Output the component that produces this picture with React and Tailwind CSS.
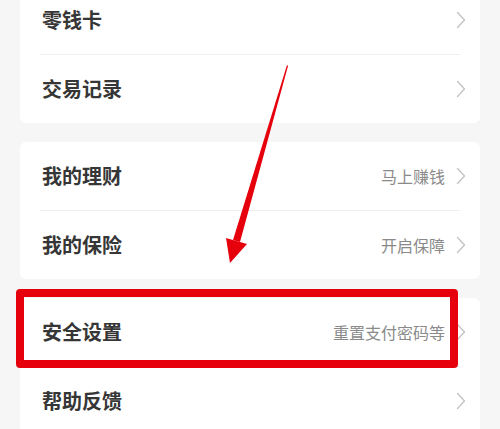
const groups = [
  [
    { title: '零钱卡' },
    { title: '交易记录' },
  ],
  [
    { title: '我的理财', hint: '马上赚钱' },
    { title: '我的保险', hint: '开启保障' },
  ],
  [
    { title: '安全设置', hint: '重置支付密码等' },
    { title: '帮助反馈' },
  ],
];

const Chevron = () => (
  <svg width="10" height="18" viewBox="0 0 10 18" fill="none" className="shrink-0">
    <path d="M1.5 1.5L8.5 9L1.5 16.5" stroke="#c4c4c4" strokeWidth="1.4" strokeLinecap="round" strokeLinejoin="round" />
  </svg>
);

const Row = ({ title, hint }) => (
  <div className="h-[68px] flex items-center justify-between pl-[22px] pr-[14px]">
    <span className="text-[20px] font-semibold text-[#363636]">{title}</span>
    <div className="flex items-center gap-[11px]">
      {hint && <span className="text-[16px] text-[#8a8a8a]">{hint}</span>}
      <Chevron />
    </div>
  </div>
);

export default function App() {
  return (
    <div
      className="relative w-[500px] h-[429px] overflow-hidden bg-[#f6f6f6]"
      style={{ fontFamily: '"Noto Sans CJK SC", "Noto Sans", sans-serif' }}
    >
      <div className="flex flex-col gap-[19px] px-[20px] -mt-[14px]">
        {groups.map((rows, i) => (
          <div key={i} className="bg-white rounded-[6px]">
            {rows.map((r, j) => (
              <div key={r.title}>
                {j > 0 && <div className="h-px bg-[#efefef] mx-[20px]" />}
                <Row {...r} />
              </div>
            ))}
          </div>
        ))}
      </div>

      {/* annotation: red highlight box */}
      <div className="absolute left-[16px] top-[289px] w-[442px] h-[79px] border-[8px] border-[#e5000c] rounded-[4px]" />

      {/* annotation: red arrow */}
      <svg className="absolute left-0 top-0" width="500" height="429" viewBox="0 0 500 429">
        <polygon points="287,65 288,66 240,242 233,240" fill="#e5000c" />
        <polygon points="226,238 247,244 230,263" fill="#e5000c" />
      </svg>
    </div>
  );
}
